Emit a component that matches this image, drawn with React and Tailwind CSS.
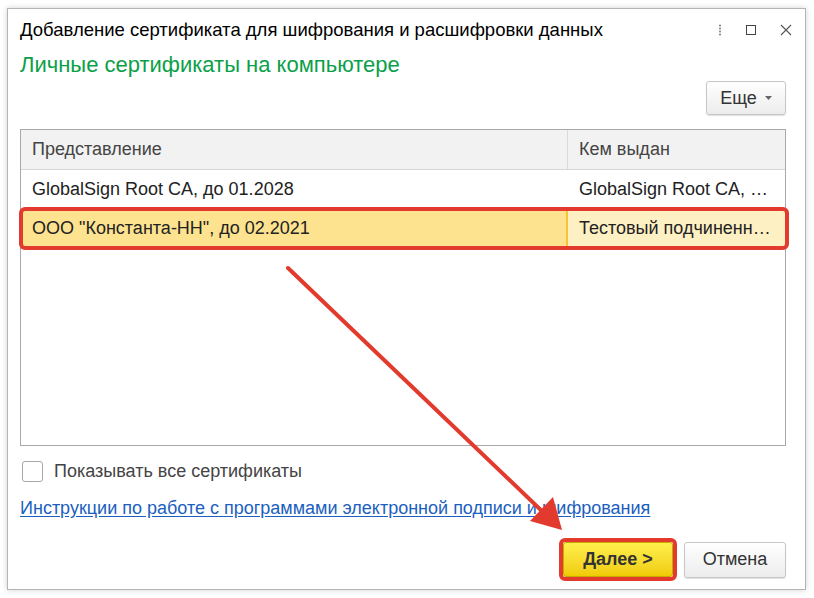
import React from "react";

export default function App() {
  return (
    <div
      className="relative w-[814px] h-[598px] bg-white pt-[8px] pl-[7px] overflow-hidden"
      style={{ fontFamily: '"Liberation Sans", Arial, sans-serif' }}
    >
      <div className="w-[799px] h-[582px] border border-[#b4b4b4] bg-white shadow-[0_0_6px_rgba(0,0,0,0.18)] flex flex-col pl-[12px] pr-[19px]">
        {/* Title */}
        <div className="h-[42px] flex items-center justify-between">
          <div className="text-[18.5px] text-black">
            Добавление сертификата для шифрования и расшифровки данных
          </div>
          <div className="flex items-center gap-[24px] mr-[-6px] text-[#555]">
            <svg width="4" height="12" viewBox="0 0 4 12">
              <circle cx="2" cy="1.5" r="1.1" fill="#8a8a8a" />
              <circle cx="2" cy="4.5" r="1.1" fill="#8a8a8a" />
              <circle cx="2" cy="7.5" r="1.1" fill="#8a8a8a" />
              <circle cx="2" cy="10.5" r="1.1" fill="#8a8a8a" />
            </svg>
            <svg width="10" height="10" viewBox="0 0 10 10">
              <rect x="0.5" y="0.5" width="9" height="9" fill="none" stroke="#444" strokeWidth="1" />
            </svg>
            <svg width="12" height="12" viewBox="0 0 12 12">
              <path d="M1 1 L11 11 M11 1 L1 11" stroke="#555" strokeWidth="1.1" />
            </svg>
          </div>
        </div>
        {/* Subtitle */}
        <div className="h-[26px] flex items-center text-[22px] text-[#0aa048]">
          Личные сертификаты на компьютере
        </div>
        {/* Еще */}
        <div className="mt-[4px] flex justify-end">
          <button className="h-[34px] w-[80px] rounded-[3px] border border-[#c6c6c6] bg-gradient-to-b from-white to-[#ececec] shadow-[0_1px_1px_rgba(0,0,0,0.12)] flex items-center justify-center gap-[8px] text-[18px] text-[#333]">
            <span>Еще</span>
            <svg width="7" height="4" viewBox="0 0 7 4">
              <path d="M0 0 L7 0 L3.5 4 Z" fill="#666" />
            </svg>
          </button>
        </div>
        {/* Table */}
        <div className="mt-[14px] h-[317px] border border-[#a9a9a9] flex flex-col text-[18px]">
          <div className="h-[40px] bg-[#f2f2f2] border-b border-[#d6d6d6] flex text-[#444]">
            <div className="w-[547px] border-r border-[#dadada] flex items-center pl-[11px]">Представление</div>
            <div className="flex-1 flex items-center pl-[11px]">Кем выдан</div>
          </div>
          <div className="h-[39px] flex text-[#222]">
            <div className="w-[547px] flex items-center pl-[11px]">GlobalSign Root CA, до 01.2028</div>
            <div className="flex-1 flex items-center pl-[11px] whitespace-nowrap overflow-hidden">GlobalSign Root CA, …</div>
          </div>
          <div className="relative h-[38px] flex text-[#222]">
            <div className="w-[547px] bg-[#fde38f] border-r-2 border-[#f6c434] flex items-center pl-[11px]">
              ООО "Константа-НН", до 02.2021
            </div>
            <div className="flex-1 bg-[#fdf0c2] flex items-center pl-[11px] whitespace-nowrap overflow-hidden">Тестовый подчиненн…</div>
            <div className="absolute left-[-2px] right-[-4px] top-[-2px] bottom-[-3px] border-[4px] border-[#e23b2e] rounded-[6px]"></div>
          </div>
        </div>
        {/* Checkbox */}
        <div className="mt-[14px] flex items-center gap-[11px] h-[22px]">
          <div className="ml-[2px] w-[21px] h-[21px] rounded-[3px] border border-[#a8a8a8] bg-white"></div>
          <span className="text-[18px] text-[#444]">Показывать все сертификаты</span>
        </div>
        {/* Link */}
        <div className="mt-[13px] text-[18px] text-[#1b5fbf] underline underline-offset-[2px]">
          Инструкции по работе с программами электронной подписи и шифрования
        </div>
        {/* Buttons */}
        <div className="mt-[16px] flex justify-end items-center gap-[7px]">
          <div className="rounded-[6px] border-[4px] border-[#e23b2e]">
            <button className="w-[110px] h-[35px] rounded-[3px] border border-[#c9a800] bg-gradient-to-b from-[#fff04a] to-[#f0cc00] text-[18px] font-bold text-[#333] flex items-center justify-center">
              Далее &gt;
            </button>
          </div>
          <button className="w-[102px] h-[36px] rounded-[3px] border border-[#c6c6c6] bg-gradient-to-b from-white to-[#ececec] shadow-[0_1px_1px_rgba(0,0,0,0.12)] text-[18px] text-[#333] flex items-center justify-center">
            Отмена
          </button>
        </div>
      </div>
      {/* Annotation arrow */}
      <svg className="absolute left-0 top-0 pointer-events-none" width="814" height="598" viewBox="0 0 814 598">
        <line x1="288" y1="268" x2="545" y2="514" stroke="#e23b2e" strokeWidth="4" strokeLinecap="round" />
        <polygon points="562,530 530,521 553,497" fill="#e23b2e" />
      </svg>
    </div>
  );
}
